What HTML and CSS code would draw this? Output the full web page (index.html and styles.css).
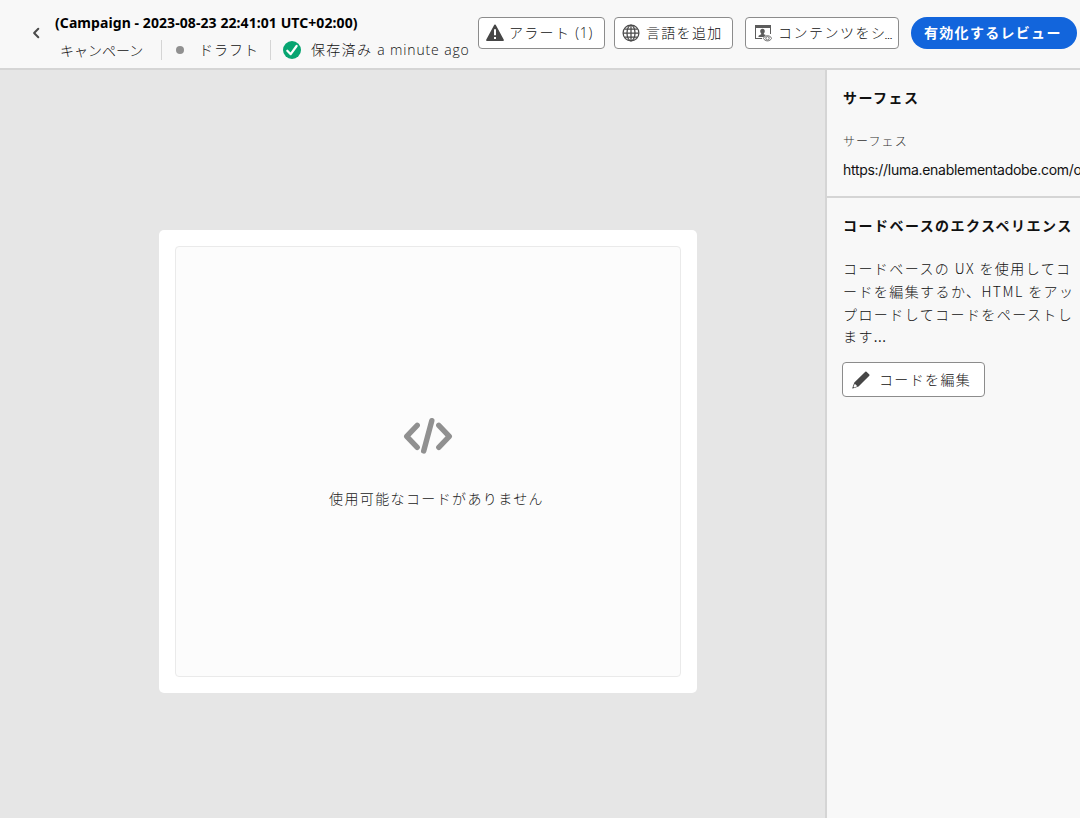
FILE: index.html
```html
<!DOCTYPE html>
<html lang="ja">
<head>
<meta charset="utf-8">
<title>キャンペーン</title>
<link rel="stylesheet" href="styles.css">
</head>
<body>
<div class="app">
  <header class="header">
    <svg class="back" viewBox="0 0 8 12" width="8" height="12"><path d="M6.300 1.800 2.100 6l4.200 4.200" fill="none" stroke="#4b4b4b" stroke-width="2" stroke-linecap="round" stroke-linejoin="round"/></svg>
    <div class="heading">
      <h1 class="title">(Campaign - 2023-08-23 22:41:01 UTC+02:00)</h1>
      <div class="meta">
        <span class="kind">キャンペーン</span>
        <span class="status"><i class="dot"></i><span class="status-text">ドラフト</span></span>
        <span class="saved">
          <svg width="18" height="18" viewBox="0 0 18 18"><circle cx="9" cy="9" r="9" fill="#07a571"/><path d="M4.300 9.700 7.700 13.200 13.600 5" fill="none" stroke="#fff" stroke-width="2.200" stroke-linecap="round" stroke-linejoin="round"/></svg>
          <span class="saved-ja">保存済み</span><span class="saved-ago">a minute ago</span>
        </span>
      </div>
    </div>
    <div class="actions">
      <button class="btn alerts"><svg width="18" height="18" viewBox="0 0 18 18"><path d="M8.300.8a.8.8 0 0 1 1.400 0l8.100 15a.8.8 0 0 1-.7 1.200H.9a.8.8 0 0 1-.7-1.200z" fill="#464646"/><path d="M8 5.200h2v6H8zM8 13h2v2H8z" fill="#fff"/></svg><span class="alerts-text">アラート</span><span class="count">(1)</span></button>
      <button class="btn language"><svg width="18" height="18" viewBox="0 0 18 18" fill="none" stroke="#4b4b4b" stroke-width="1.250"><circle cx="9" cy="9" r="7.900"/><ellipse cx="9" cy="9" rx="4" ry="7.900"/><path d="M9 1v16M1 9h16M2.500 5h13M2.500 13h13"/></svg><span class="language-text">言語を追加</span></button>
      <button class="btn simulate"><svg width="18" height="18" viewBox="0 0 18 18"><path d="M1 1h16v9h-1V4H2v10h6v1H1z" fill="#5c5c5c"/><path d="M8.500 4.800c1.500 0 2.300 1 2.300 2.400 0 1-.4 1.800-1 2.300v.7l2 .8-2.200 2H4.500v-1c0-.8 2.700-1.500 2.700-1.700v-.8c-.6-.5-1-1.300-1-2.300 0-1.400.8-2.400 2.300-2.400z" fill="#5c5c5c"/><path d="M9.300 14.300c1-1.700 2.400-2.600 4.200-2.600s3.200.9 4.200 2.600c-1 1.700-2.400 2.600-4.200 2.600s-3.200-.9-4.200-2.600z" fill="#fff" stroke="#707070"/><circle cx="13.500" cy="14.300" r="1.700" fill="none" stroke="#707070"/></svg><span class="simulate-text">コンテンツをシ</span><span class="ellipsis">…</span></button>
      <button class="btn-primary"><span class="primary-text">有効化するレビュー</span></button>
    </div>
  </header>
  <div class="body">
    <main class="canvas">
      <div class="card"><div class="empty">
        <svg class="code-icon" width="50" height="38" viewBox="0 0 50 38" fill="none" stroke="#909090" stroke-width="5.400" stroke-linecap="round" stroke-linejoin="round"><path d="M14.200 8.300 3.700 19.300l10.500 11M35.800 8.300 46.300 19.300 35.800 30.300"/><path d="M28.800 3.700 20.700 34"/></svg>
        <p class="empty-text">使用可能なコードがありません</p>
      </div></div>
    </main>
    <aside class="panel">
      <section class="surface">
        <h2 class="section-title">サーフェス</h2>
        <div class="label">サーフェス</div>
        <div class="url">https://luma.enablementadobe.com/o</div>
      </section>
      <section class="experience">
        <h2 class="section-title">コードベースのエクスペリエンス</h2>
        <p class="description"><span class="line">コードベースの UX を使用してコ</span><span class="line">ードを編集するか、HTML をアッ</span><span class="line">プロードしてコードをペーストし</span><span class="line">ます<span class="dots">...</span></span></p>
        <button class="btn edit"><svg width="18" height="18" viewBox="0 0 18 18"><path d="M13.300.7a.9.900 0 0 1 1.200 0l2.800 2.800a.9.900 0 0 1 0 1.200L6.500 15.500.8 17.600a.4.4 0 0 1-.5-.5l2-5.500z" fill="#464646"/><path d="m2.800 12.700 2.500 2.500-3.200 1.200-.6-.6z" fill="#fff"/></svg><span class="edit-text">コードを編集</span></button>
      </section>
    </aside>
  </div>
</div>
</body>
</html>
```
FILE: styles.css
```css
* { box-sizing: border-box; }
body { margin: 0; overflow: hidden; background: #e6e6e6; color: #111; font-family: "Noto Sans CJK JP", sans-serif; font-size: 14px; font-weight: 300; }
h1, h2, p { margin: 0; }
svg { display: block; flex: none; }
button { font: inherit; color: inherit; margin: 0; }
.app { width: 1080px; height: 818px; display: flex; flex-direction: column; overflow: hidden; }
.header { height: 70px; flex: none; display: flex; background: #f8f8f8; border-bottom: 2px solid #d5d5d5; padding-left: 32px; }
.back { margin-top: 27px; }
.heading { width: 438px; flex: none; padding: 13px 0 0 15px; }
.title { height: 20px; line-height: 20px; font-family: "Noto Sans", sans-serif; font-size: 14px; font-weight: 700; letter-spacing: 0.080px; color: #000; white-space: nowrap; }
.meta { display: flex; height: 34px; align-items: center; white-space: nowrap; line-height: 20px; }
.kind { width: 106px; padding-left: 5px; letter-spacing: 0; }
.status { display: flex; align-items: center; width: 110px; height: 20px; border-left: 1px solid #d5d5d5; border-right: 1px solid #d5d5d5; padding-left: 14px; }
.dot { width: 8px; height: 8px; border-radius: 50%; background: #909090; }
.status-text { margin: -2px 0 0 15px; letter-spacing: 1px; }
.saved { display: flex; align-items: center; padding-left: 12px; }
.saved-ja { margin: -2px 0 0 10px; letter-spacing: 1.300px; }
.saved-ago { font-family: "Open Sans", sans-serif; letter-spacing: 0.870px; margin-left: 5px; }
.actions { display: flex; padding-top: 17px; flex: none; }
.btn { display: flex; align-items: center; height: 32px; border: 1px solid #8c8c8c; border-radius: 4px; background: #fff; padding: 0 0 0 7px; white-space: nowrap; flex: none; line-height: 20px; }
.alerts { width: 127px; }
.alerts-text { margin: -2px 0 0 5px; letter-spacing: 1.300px; }
.count { font-family: "Open Sans", sans-serif; margin-left: 5px; letter-spacing: 0.800px; }
.language { width: 119px; margin-left: 9px; }
.language-text { margin: -2px 0 0 6px; letter-spacing: 1.300px; }
.simulate { width: 154px; margin-left: 12px; padding-left: 8px; }
.simulate-text { margin: -2px 0 0 6px; letter-spacing: 1.500px; }
.ellipsis { font-family: "Liberation Sans", sans-serif; font-size: 8px; font-weight: 700; line-height: 8px; margin: 8px 0 0 -2px; }
.btn-primary { width: 166px; height: 32px; margin-left: 12px; padding: 0 0 2px 13px; border: 0; border-radius: 16px; background: #1265dc; color: #fff; font-weight: 700; text-align: left; white-space: nowrap; line-height: 20px; flex: none; }
.primary-text { letter-spacing: 1.300px; }
.body { display: flex; flex: 1; min-height: 0; }
.canvas { width: 825px; flex: none; padding: 160px 0 0 159px; background: #e6e6e6; }
.card { width: 538px; height: 463px; padding: 16px; border-radius: 5px; background: #fff; }
.empty { height: 431px; border: 1px solid #eaeaea; border-radius: 4px; background: #fcfcfc; display: flex; flex-direction: column; padding: 170px 0 0 153px; }
.code-icon { margin-left: 74px; }
.empty-text { margin-top: 33px; line-height: 20px; letter-spacing: 1.380px; white-space: nowrap; color: #222; }
.panel { width: 255px; flex: none; background: #f8f8f8; border-left: 2px solid #d5d5d5; overflow: hidden; }
.surface { height: 128px; padding: 17px 0 0 16px; border-bottom: 2px solid #d5d5d5; }
.section-title { font-size: 14px; line-height: 20px; font-weight: 700; letter-spacing: 1.470px; white-space: nowrap; }
.label { font-size: 12px; line-height: 20px; letter-spacing: 1.100px; margin-top: 24px; color: #333; }
.url { font-family: Inter, sans-serif; font-size: 14px; font-weight: 400; letter-spacing: -0.290px; line-height: 20px; margin-top: 9px; white-space: nowrap; }
.experience { padding: 17px 0 0 16px; }
.description { margin-top: 22px; line-height: 22.750px; letter-spacing: 1.420px; white-space: nowrap; }
.line { display: block; }
.dots { font-family: "Open Sans", sans-serif; letter-spacing: 0.500px; font-weight: 400; }
.edit { width: 143px; height: 35px; margin: 13px 0 0 -1px; padding-left: 9px; }
.edit-text { margin: -2px 0 0 9px; letter-spacing: 1.350px; }
```
